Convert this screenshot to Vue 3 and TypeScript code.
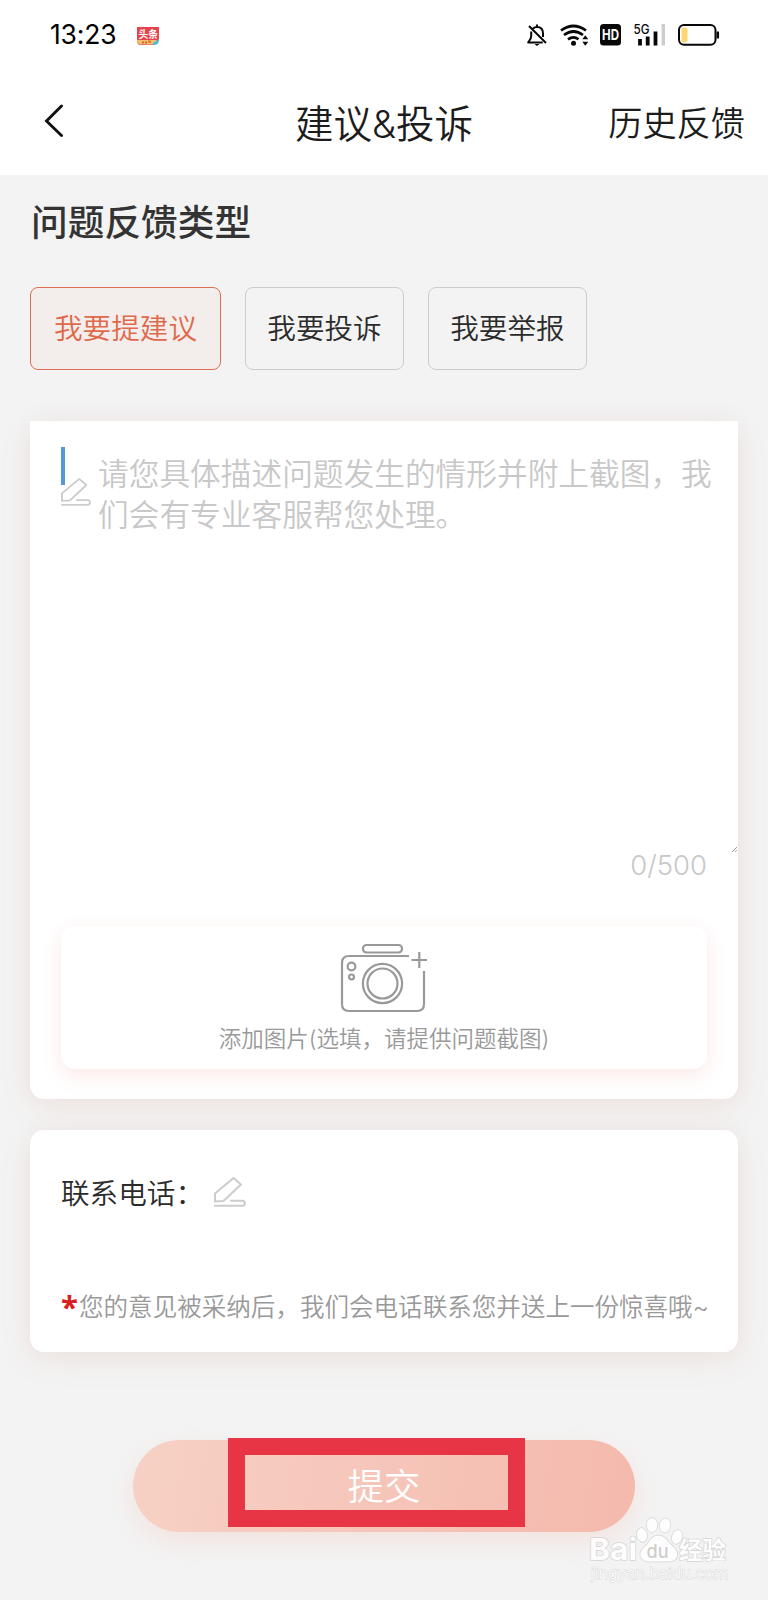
<script setup lang="ts">
import { ref } from 'vue'

const types = ['我要提建议', '我要投诉', '我要举报']
const active = ref(0)
</script>

<template>
  <div class="page">
    <header class="top">
      <div class="status">
        <span class="time">13:23</span>
        <svg class="news" viewBox="0 0 24 20" width="24" height="20">
          <path d="M1 1h22v13.5L17 19H4q-3-1-3-4z" fill="#e8434c" />
          <path d="M1 14h20l-3 4.500H4q-3-1-3-4.500z" fill="#f5bd6b" />
          <path d="M23 13v2q-1 4-5 4l-2-1z" fill="#45bfd0" />
          <text x="2.500" y="11.500" font-size="9.800" font-weight="700" fill="#fff">头条</text>
          <path d="M6 16.500h2m1 0h2m1-.8h3" stroke="#d9643c" stroke-width="1.800" />
        </svg>
        <svg class="icons" viewBox="0 0 200 30" width="200" height="30" fill="none" stroke="#080808">
          <path d="M6.800 6.700C8 5.500 9.400 5 11 5c3.700 0 6 2.500 6 6.500v3.500M5.200 9.500V14c0 3-2 4.500-3 6.500h14.500M11 5V2.500M3 4l17 17" stroke-width="2" stroke-linejoin="round" />
          <path d="M8.500 22h5l-2.500 2z" fill="#080808" stroke="none" />
          <path d="M35 8.500Q47.500-.5 60 8.500M38 13q9.500-7 19 0M42 17.300q5.500-4 10.500 0" stroke-width="2.700" />
          <circle cx="47.500" cy="21.300" r="2.500" fill="#080808" stroke="none" />
          <path d="M56.300 17.300l3-4 3 4zM56.300 19.800l3 4 3-4z" fill="#080808" stroke="none" />
          <rect x="74" y="2" width="21" height="21.500" rx="3.500" fill="#080808" stroke="none" />
          <text x="84.500" y="18" text-anchor="middle" textLength="17" lengthAdjust="spacingAndGlyphs" font-size="15" font-weight="700" fill="#fff" stroke="none">HD</text>
          <text x="107.500" y="11.500" textLength="16" lengthAdjust="spacingAndGlyphs" font-size="13" font-weight="500" fill="#080808" stroke="none">5G</text>
          <path d="M114 17v6.500M121.700 14.500v9M129.500 9.500v14" stroke-width="3.800" />
          <path d="M137.300 2v21.500" stroke="#ccc" stroke-width="3.400" />
          <rect x="153" y="3" width="36.500" height="19.800" rx="5" stroke-width="2" />
          <rect x="155.500" y="5.500" width="6" height="15" rx="2" fill="#fbd873" stroke="none" />
          <path d="M191.800 9.500v7" stroke-width="2.500" />
        </svg>
      </div>
      <nav class="nav">
        <svg class="back" viewBox="0 0 20 34" width="20" height="34">
          <path d="M17.500 2L2.500 17l15 14.500" fill="none" stroke="#111" stroke-width="2.900" stroke-linecap="round" />
        </svg>
        <h1>建议&amp;投诉</h1>
        <a class="history">历史反馈</a>
      </nav>
    </header>

    <main>
      <h2>问题反馈类型</h2>
      <div class="chips">
        <button v-for="(t, i) in types" :key="t" :class="{ on: active === i }" @click="active = i">{{ t }}</button>
      </div>

      <section class="card describe">
        <div class="field">
          <svg class="pencil" viewBox="0 0 32 30" width="30" height="30">
            <path d="M1 24.500v-8L19.500 1 27 7.500 9.500 24zM1 28.700h27.500c3 0 3-5 0-5H17" />
          </svg>
          <i class="caret"></i>
          <p>请您具体描述问题发生的情形并附上截图，我们会有专业客服帮您处理。</p>
          <svg class="grip" viewBox="0 0 6 6" width="5" height="5"><path d="M0 6l6-6M3.500 6L6 3.500" stroke="#777" stroke-width=".9" /></svg>
        </div>
        <div class="count">0/500</div>
        <div class="upload">
          <svg viewBox="0 0 88 70" width="88" height="70" fill="none" stroke="#999" stroke-width="2.200">
            <rect x="23" y="2" width="39" height="7.500" rx="3.500" />
            <path d="M69 13H9q-7 0-7 7v41q0 7 7 7h68q7 0 7-7V28" />
            <path d="M71.500 17H87M79.300 9v16" />
            <circle cx="42.500" cy="40.500" r="19.600" />
            <circle cx="42.500" cy="40.500" r="15" />
            <circle cx="11.500" cy="23.500" r="3.900" />
            <circle cx="11.500" cy="34" r="2.500" />
          </svg>
          <span>添加图片(选填，请提供问题截图)</span>
        </div>
      </section>

      <section class="card contact">
        <div class="phone">
          <span>联系电话：</span>
          <svg class="pencil" viewBox="0 0 32 30" width="32" height="30">
            <path d="M1 24.500v-8L19.500 1 27 7.500 9.500 24zM1 28.700h27.500c3 0 3-5 0-5H17" />
          </svg>
        </div>
        <p class="note"><b>*</b><span>您的意见被采纳后，我们会电话联系您并送上一份惊喜哦~</span></p>
      </section>

      <button class="submit">提交<i class="mark"></i></button>
    </main>

    <svg class="water" viewBox="0 0 150 72" width="150" height="72" fill="#fff" stroke="#d0d0d0" stroke-width="1.400" paint-order="stroke">
      <text x="8" y="47" font-size="30" font-weight="700" textLength="48" lengthAdjust="spacingAndGlyphs">Bai</text>
      <ellipse cx="61" cy="22" rx="5" ry="7" transform="rotate(-12 61 22)" />
      <ellipse cx="71" cy="12" rx="5.300" ry="7" />
      <ellipse cx="84" cy="12.500" rx="5.300" ry="7" transform="rotate(8 84 12.500)" />
      <ellipse cx="96" cy="24" rx="5" ry="7" transform="rotate(18 96 24)" />
      <path d="M77 22.500c-7 0-8 7-13 11-8 6-5 15 4 15h20c9 0 11-9 4-15-5-4-7-11-15-11z" />
      <text class="du" x="65.500" y="44.500" font-size="19" font-weight="500" textLength="22" lengthAdjust="spacingAndGlyphs">du</text>
      <text x="98" y="46" font-size="23.500" font-weight="700" textLength="47" lengthAdjust="spacingAndGlyphs">经验</text>
      <text class="url" x="10" y="66" font-size="15.500" textLength="137" lengthAdjust="spacingAndGlyphs">jingyan.baidu.com</text>
    </svg>
  </div>
</template>

<style>
body { background: #f3f3f3; }
</style>

<style scoped>
.page {
  position: relative;
  height: 1600px;
  overflow: hidden;
  background: #f3f3f3;
  color: #333;
  font-family: Inter, "Noto Sans CJK SC", sans-serif;
  font-weight: 350;
}
.page * { box-sizing: border-box; }
h1, h2, p { margin: 0; }
svg { flex: none; display: block; }
button { font: inherit; }
.top { height: 175px; background: #fff; }
.status { height: 70px; display: flex; align-items: center; padding: 0 42px 0 50px; }
.time { margin-top: -2px; font-size: 26.500px; font-weight: 380; color: #000; letter-spacing: -.2px; }
.news { margin: 1px auto 0 20px; }
.icons { margin-top: 3px; }
.nav { display: grid; grid-template-columns: 1fr auto 1fr; align-items: center; height: 105px; padding: 0 23px 0 44px; }
.back { margin-top: -3px; }
.nav h1 { font-size: 38.500px; font-weight: 350; line-height: 60px; color: #1c1c1c; margin: 2px 0 0 -21px; }
.history { justify-self: end; margin-top: 2px; font-size: 34.200px; line-height: 60px; color: #1c1c1c; }
main { padding: 0 30px; }
h2 { font-size: 36.700px; line-height: 54px; padding: 21px 0 37px 1px; font-weight: 500; }
.chips { display: flex; gap: 24px; height: 83px; }
.chips button { border: 1.500px solid #ccc; border-radius: 8px; padding: 0 21.300px 4px; background: transparent; color: #2b2b2b; font-size: 28.600px; }
.chips .on { padding: 0 23px 4px; border-color: #dc7054; color: #e0694b; background: #f3eeeb; }
.card { background: #fff; border-radius: 14px; box-shadow: 0 8px 30px rgba(225, 140, 110, .12), 0 0 24px rgba(110, 60, 80, .035); }
.describe { margin-top: 51px; height: 678px; padding: 26px 31px 30px; border-radius: 0 0 14px 14px; }
.field { position: relative; display: flex; height: 406px; margin-right: -31px; padding-right: 18px; }
.pencil { fill: none; stroke: #ccc; stroke-width: 2; stroke-linejoin: round; stroke-linecap: round; }
.field .pencil { margin-top: 30px; margin-left: -.5px; }
.caret { position: absolute; left: 0; top: 0; width: 4px; height: 38px; background: #5598db; }
.field p { margin-left: 7.500px; padding-top: 7px; font-size: 30.700px; line-height: 40.800px; color: #c8c8c8; }
.grip { position: absolute; right: 1px; bottom: 1px; }
.count { height: 73px; text-align: right; font-size: 27.500px; line-height: 25px; color: #c8c8c8; }
.upload { height: 143px; border-radius: 14px; background: #fff; box-shadow: 0 8px 20px rgba(235, 130, 110, .13), 0 0 18px rgba(200, 100, 110, .035); display: flex; flex-direction: column; align-items: center; padding-top: 17px; font-size: 22.500px; line-height: 32px; color: #999; }
.upload svg { margin-left: -1px; }
.upload span { margin-top: 10px; white-space: nowrap; }
.contact { margin-top: 31px; height: 222px; padding: 42px 29px 0 31px; }
.phone { display: flex; height: 40px; align-items: center; font-size: 28.600px; color: #2b2b2b; }
.phone span { margin-top: -2px; }
.phone svg { margin-left: 10px; }
.note { display: flex; margin-top: 77px; font-size: 24.550px; line-height: 36px; color: #999; white-space: nowrap; }
.note b { width: 18px; color: #d92020; font: 700 31px/34px "Open Sans", sans-serif; }
.submit { position: relative; display: block; width: 502px; height: 92px; margin: 88px 0 0 103px; padding: 0 0 3px; border: 0; border-radius: 46px; background: linear-gradient(100deg, #f7d1c5, #f5b9ad); box-shadow: 0 10px 24px rgba(245, 150, 120, .16); color: #fff; font-size: 36.500px; }
.mark { position: absolute; left: 95px; top: -2px; width: 297px; height: 89px; border: 17px solid #e83545; }
.water { position: absolute; left: 581px; top: 1513px; opacity: .85; }
.water .du { fill: #c8c8c8; stroke: none; }
.water .url { stroke-width: .9px; }
</style>
